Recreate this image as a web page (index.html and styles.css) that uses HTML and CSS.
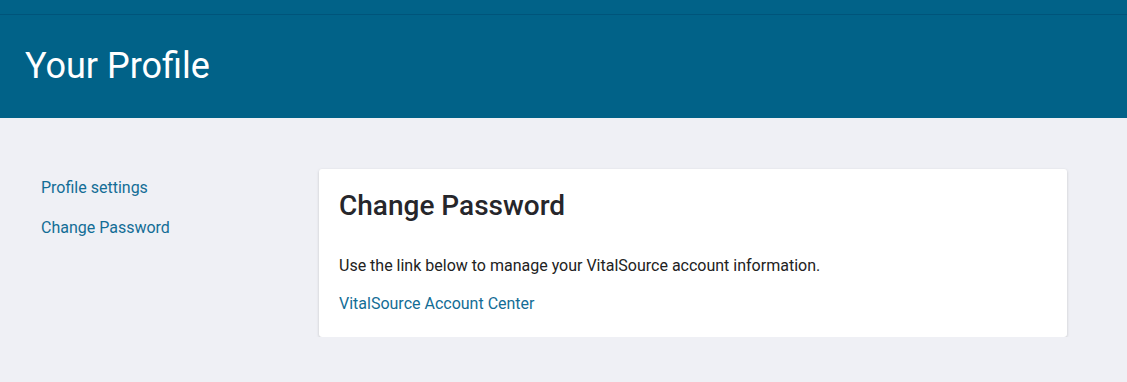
FILE: index.html
```html
<!DOCTYPE html>
<html lang="en">
<head>
    <meta charset="UTF-8">
    <meta name="viewport" content="width=device-width, initial-scale=1.0">
    <title>Your Profile</title>
    <link rel="stylesheet" href="styles.css">
</head>
<body>
    <header class="site-header">
        <div class="top-bar"></div>
        <div class="page-title">
            <h1>Your Profile</h1>
        </div>
    </header>

    <main class="profile">
        <nav class="side-nav">
            <a href="#">Profile settings</a>
            <a href="#">Change Password</a>
        </nav>

        <section class="card">
            <h2>Change Password</h2>
            <p>Use the link below to manage your VitalSource account information.</p>
            <a href="#">VitalSource Account Center</a>
        </section>
    </main>
</body>
</html>
```

FILE: styles.css
```css
* {
    box-sizing: border-box;
}

body {
    margin: 0;
    font-family: Roboto, "Liberation Sans", sans-serif;
    background-color: #eff0f5;
    color: #222;
}

a {
    color: #136d96;
    text-decoration: none;
}

/* 顶部蓝色区域 */
.site-header {
    background-color: #016288;
}

.top-bar {
    height: 15px;
    border-bottom: 1px solid #00547a;
}

.page-title {
    height: 103px;
    display: flex;
    align-items: center;
    padding: 0 25px 1px;
    > h1 {
        margin: 0;
        font-size: 36px;
        font-weight: 400;
        color: #fff;
    }
}

/* 主体：左边导航 + 卡片 */
.profile {
    display: flex;
    align-items: flex-start;
    padding: 51px 60px 0 41px;
}

.side-nav {
    width: 278px;
    display: flex;
    flex-direction: column;
    gap: 16px;
    padding-top: 7px;
    > a {
        font-size: 16px;
        line-height: 24px;
    }
}

.card {
    flex: 1;
    background-color: #fff;
    border-radius: 3px;
    box-shadow: 0 1px 3px rgba(0, 0, 0, 0.18);
    padding: 20px 20px 21px;
    > h2 {
        margin: 0;
        font-size: 28px;
        font-weight: 500;
        line-height: 34px;
        color: #26262b;
    }
    > p {
        margin: 31px 0 14px;
        font-size: 16px;
        line-height: 24px;
    }
    > a {
        display: block;
        font-size: 16px;
        line-height: 24px;
    }
}
```
